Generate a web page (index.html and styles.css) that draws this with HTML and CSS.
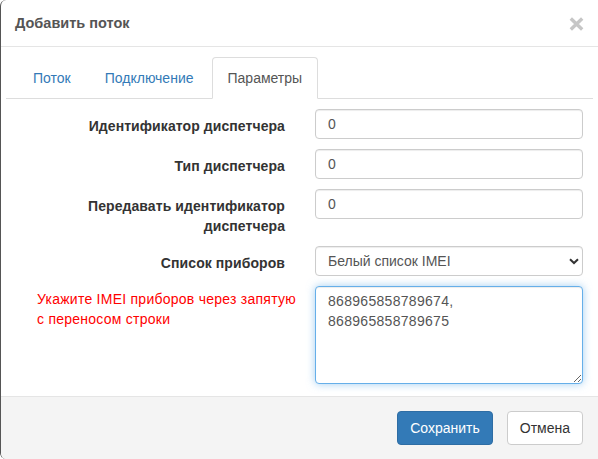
FILE: index.html
```html
<!DOCTYPE html>
<html lang="ru">
<head>
<meta charset="utf-8">
<title>Добавить поток</title>
<link rel="stylesheet" href="styles.css">
</head>
<body>
<div class="modal">
  <div class="modal-header">
    <h4 class="modal-title">Добавить поток</h4>
    <button class="close" type="button" aria-label="Закрыть">
      <svg width="15" height="14" viewBox="0 0 15 14"><path d="M1.8 1.5 L13.2 12.5 M13.2 1.5 L1.8 12.5" stroke="#c6c6c6" stroke-width="3.4" fill="none"/></svg>
    </button>
  </div>
  <div class="modal-body">
    <ul class="nav-tabs">
      <li><a href="#">Поток</a></li>
      <li><a href="#">Подключение</a></li>
      <li class="active"><a href="#">Параметры</a></li>
    </ul>
    <form class="form">
      <div class="form-group">
        <label class="control-label">Идентификатор диспетчера</label>
        <input class="form-control" type="text" value="0">
      </div>
      <div class="form-group">
        <label class="control-label">Тип диспетчера</label>
        <input class="form-control" type="text" value="0">
      </div>
      <div class="form-group">
        <label class="control-label">Передавать идентификатор диспетчера</label>
        <input class="form-control" type="text" value="0">
      </div>
      <div class="form-group">
        <label class="control-label">Список приборов</label>
        <div class="select-wrap">
          <select class="form-control select">
            <option>Белый список IMEI</option>
          </select>
          <svg class="chevron" width="10" height="7" viewBox="0 0 10 7"><path d="M1 1.2 L5 5 L9 1.2" stroke="#333" stroke-width="2" fill="none"/></svg>
        </div>
      </div>
      <div class="form-group">
        <div class="hint">Укажите IMEI приборов через запятую<br>с переносом строки</div>
        <textarea class="form-control textarea focused">868965858789674,
868965858789675</textarea>
      </div>
    </form>
  </div>
  <div class="modal-footer">
    <button class="btn btn-primary" type="button">Сохранить</button>
    <button class="btn btn-default" type="button">Отмена</button>
  </div>
</div>
</body>
</html>
```

FILE: styles.css
```css
* {
  box-sizing: border-box;
}

html, body {
  margin: 0;
  padding: 0;
  background: #fff;
}

body {
  font-family: "Liberation Sans", Arial, sans-serif;
  font-size: 14px;
  line-height: 20px;
  color: #333;
}

.modal {
  width: 598px;
  height: 459px;
  border-left: 1px solid #555;
  border-radius: 6px 0 0 6px;
  overflow: hidden;
  background: #fff;
  display: flex;
  flex-direction: column;
}

.modal-header {
  height: 47px;
  border-bottom: 1px solid #e5e5e5;
  padding: 0 14px 0 14px;
  display: flex;
  align-items: center;
  justify-content: space-between;
}

.modal-title {
  margin: 0;
  font-size: 14.5px;
  font-weight: bold;
  color: #555;
  line-height: 20px;
}

.close {
  background: none;
  border: 0;
  padding: 0;
  margin: 1px 0 0 0;
  width: 15px;
  height: 14px;
  display: flex;
  cursor: pointer;
}

.modal-body {
  padding: 10px 0 2px 0;
}

.nav-tabs {
  list-style: none;
  margin: 0 5px 0 5px;
  padding: 0 0 0 11px;
  display: flex;
  border-bottom: 1px solid #ddd;
}

.nav-tabs li {
  margin-bottom: -1px;
}

.nav-tabs a {
  display: block;
  padding: 10px 15px;
  line-height: 20px;
  margin-right: 2px;
  border: 1px solid transparent;
  border-radius: 4px 4px 0 0;
  color: #337ab7;
  text-decoration: none;
}

.nav-tabs .active a {
  color: #555;
  background: #fff;
  border-color: #ddd #ddd transparent #ddd;
}

.form {
  padding: 10px 0 0 14px;
}

.form-group {
  display: grid;
  grid-template-columns: 270px 268px;
  column-gap: 30px;
  align-items: start;
  margin-bottom: 10px;
}

.control-label {
  text-align: right;
  font-weight: bold;
  padding-top: 7px;
  color: #333;
  letter-spacing: 0.08px;
}

.form-control {
  display: block;
  width: 100%;
  height: 30px;
  padding: 4px 12px;
  font-family: "Liberation Sans", Arial, sans-serif;
  font-size: 14px;
  line-height: 20px;
  color: #555;
  background: #fff;
  border: 1px solid #ccc;
  border-radius: 4px;
  box-shadow: inset 0 1px 1px rgba(0, 0, 0, .075);
  outline: none;
}

.select-wrap {
  position: relative;
}

.select {
  -webkit-appearance: none;
  appearance: none;
  padding-right: 24px;
}

.chevron {
  position: absolute;
  right: 4px;
  top: 12px;
  pointer-events: none;
}

.hint {
  color: #f00;
  white-space: nowrap;
  padding: 3px 0 0 22px;
  letter-spacing: 0.25px;
}

.textarea {
  height: 98px;
  resize: vertical;
  overflow: hidden;
  letter-spacing: 0.3px;
}

.focused {
  border-color: #66afe9;
  box-shadow: inset 0 1px 1px rgba(0, 0, 0, .075), 0 0 8px rgba(102, 175, 233, .6);
}

.modal-footer {
  flex: 1;
  border-top: 1px solid #e5e5e5;
  background: #f4f4f4;
  padding: 14px 15px 14px 15px;
  display: flex;
  justify-content: flex-end;
  align-items: flex-start;
  gap: 14px;
}

.btn {
  font-family: "Liberation Sans", Arial, sans-serif;
  font-size: 14px;
  line-height: 20px;
  padding: 6px 12px;
  border: 1px solid transparent;
  border-radius: 4px;
  cursor: pointer;
}

.btn-primary {
  background: #337ab7;
  border-color: #2e6da4;
  color: #fff;
}

.btn-default {
  background: #fff;
  border-color: #ccc;
  color: #333;
}
```
